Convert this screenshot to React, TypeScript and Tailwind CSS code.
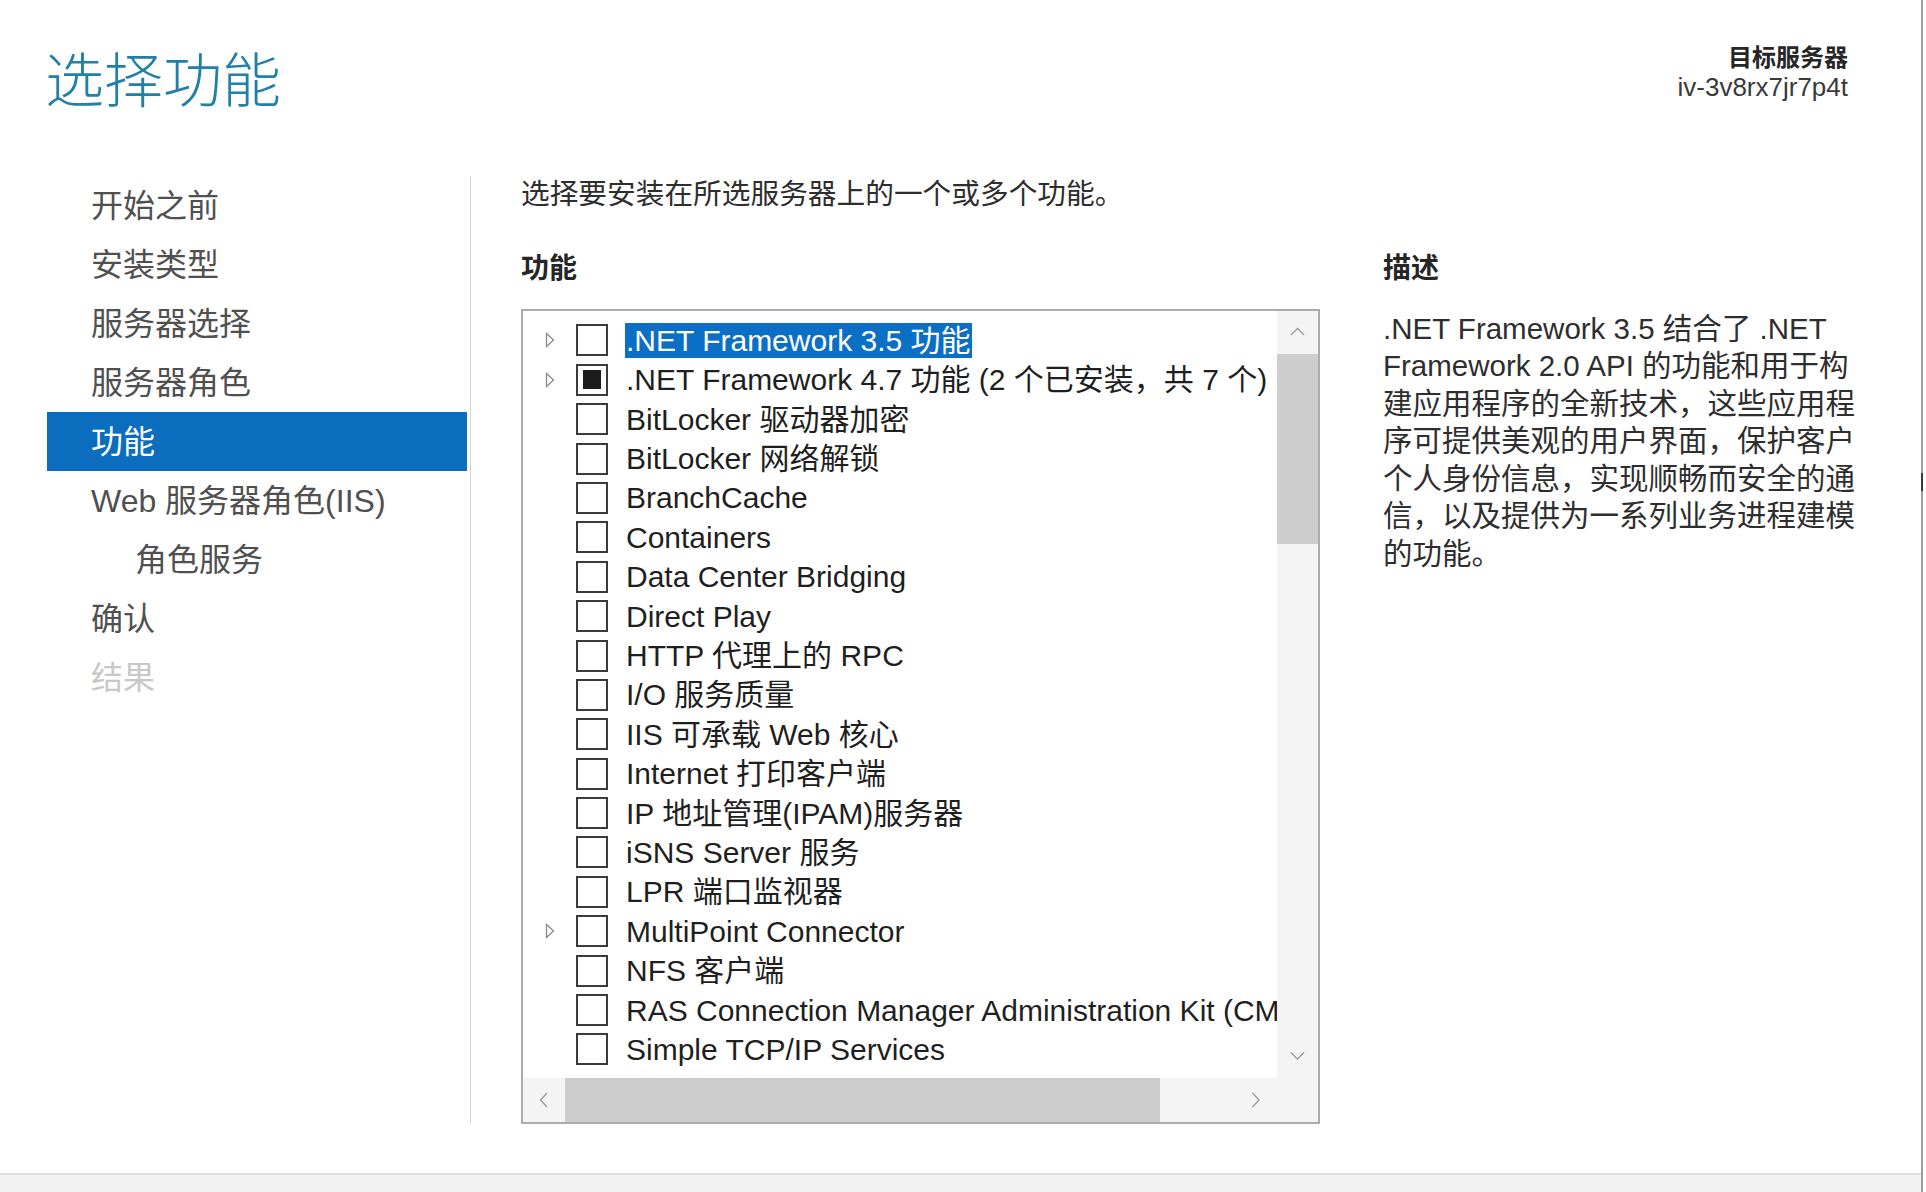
import React from 'react';

type Feature = {
  label: string;
  expand?: boolean;
  partial?: boolean;
  selected?: boolean;
};

const features: Feature[] = [
  { label: '.NET Framework 3.5 功能', expand: true, selected: true },
  { label: '.NET Framework 4.7 功能 (2 个已安装，共 7 个)', expand: true, partial: true },
  { label: 'BitLocker 驱动器加密' },
  { label: 'BitLocker 网络解锁' },
  { label: 'BranchCache' },
  { label: 'Containers' },
  { label: 'Data Center Bridging' },
  { label: 'Direct Play' },
  { label: 'HTTP 代理上的 RPC' },
  { label: 'I/O 服务质量' },
  { label: 'IIS 可承载 Web 核心' },
  { label: 'Internet 打印客户端' },
  { label: 'IP 地址管理(IPAM)服务器' },
  { label: 'iSNS Server 服务' },
  { label: 'LPR 端口监视器' },
  { label: 'MultiPoint Connector', expand: true },
  { label: 'NFS 客户端' },
  { label: 'RAS Connection Manager Administration Kit (CMAK)' },
  { label: 'Simple TCP/IP Services' },
];

const steps = [
  { label: '开始之前' },
  { label: '安装类型' },
  { label: '服务器选择' },
  { label: '服务器角色' },
  { label: '功能', active: true },
  { label: 'Web 服务器角色(IIS)' },
  { label: '角色服务', sub: true },
  { label: '确认' },
  { label: '结果', disabled: true },
];

const description = [
  '.NET Framework 3.5 结合了 .NET',
  'Framework 2.0 API 的功能和用于构',
  '建应用程序的全新技术，这些应用程',
  '序可提供美观的用户界面，保护客户',
  '个人身份信息，实现顺畅而安全的通',
  '信，以及提供为一系列业务进程建模',
  '的功能。',
];

function Expander() {
  return (
    <svg width="10" height="16" viewBox="0 0 10 16">
      <polygon points="1.5,1.5 8.5,8 1.5,14.5" fill="none" stroke="#8a8a8a" strokeWidth="1.3" />
    </svg>
  );
}

function Chevron({ dir }: { dir: 'up' | 'down' | 'left' | 'right' }) {
  if (dir === 'up' || dir === 'down') {
    const pts = dir === 'up' ? '1,8 7.5,1.5 14,8' : '1,1.5 7.5,8 14,1.5';
    return (
      <svg width="15" height="10" viewBox="0 0 15 10">
        <polyline points={pts} fill="none" stroke="#9c9c9c" strokeWidth="1.4" />
      </svg>
    );
  }
  const pts = dir === 'left' ? '8,1 1.5,8 8,15' : '1.5,1 8,8 1.5,15';
  return (
    <svg width="10" height="16" viewBox="0 0 10 16">
      <polyline points={pts} fill="none" stroke="#9c9c9c" strokeWidth="1.4" />
    </svg>
  );
}

function FeatureRow({ item }: { item: Feature }) {
  return (
    <div className="flex h-[39.4px] items-center whitespace-nowrap pl-[20px]">
      <div className="flex w-[14px] shrink-0 justify-center">{item.expand && <Expander />}</div>
      <div className="ml-[19px] flex h-[32px] w-[32px] shrink-0 items-center justify-center border-2 border-[#3a3a3a] bg-white">
        {item.partial && <div className="h-[19px] w-[18px] bg-[#1c1c1c]" />}
      </div>
      <span
        className={`ml-[17px] shrink-0 px-[1px] text-[30px] leading-[35px] ${
          item.selected ? 'bg-[#0c6fc6] text-white' : 'text-[#1f1f1f]'
        }`}
      >
        {item.label}
      </span>
    </div>
  );
}

export default function App() {
  return (
    <div className="h-[1192px] w-[1926px] overflow-hidden bg-white font-['Liberation_Sans','Noto_Sans_CJK_SC',sans-serif]">
      <div className="relative flex h-full w-[1923px] flex-col border-r-2 border-[#9d9d9d]">
        {/* resize grip tick */}
        <div className="absolute right-[-2px] top-[473px] h-[18px] w-[2px] bg-[#3a3a3a]" />

        {/* Header */}
        <header className="flex h-[176px] shrink-0 justify-between">
          <h1 className="pl-[45px] pt-[47px] font-['Noto_Sans_CJK_SC',sans-serif] text-[59px] font-light leading-none text-[#2180a8]">
            选择功能
          </h1>
          <div className="pr-[73px] pt-[44px] text-right">
            <div className="font-['Noto_Sans_CJK_SC',sans-serif] text-[24px] font-bold leading-none text-[#262626]">
              目标服务器
            </div>
            <div className="mt-[6px] text-[26px] leading-[26px] text-[#3a3a3a]">iv-3v8rx7jr7p4t</div>
          </div>
        </header>

        {/* Main */}
        <div className="flex h-[948px] shrink-0">
          {/* Steps */}
          <nav className="w-[471px] shrink-0 border-r border-[#d5d5d5] pl-[47px] pr-[3px]">
            {steps.map((s) => (
              <div
                key={s.label}
                className={`flex h-[59px] items-center text-[32px] leading-none ${
                  s.sub ? 'pl-[88px]' : 'pl-[44px]'
                } ${
                  s.active
                    ? 'bg-[#0b6dbd] text-white'
                    : s.disabled
                    ? 'text-[#c8c8c8]'
                    : 'text-[#505050]'
                }`}
              >
                {s.label}
              </div>
            ))}
          </nav>

          {/* Content */}
          <section className="flex flex-1 flex-col pl-[50px] pt-[2px]">
            <p className="font-['Noto_Sans_CJK_SC',sans-serif] text-[28.7px] leading-none text-[#2e2e2e]">
              选择要安装在所选服务器上的一个或多个功能。
            </p>

            <div className="mt-[45px] flex gap-[63px]">
              {/* Features */}
              <div className="w-[799px] shrink-0">
                <h2 className="font-['Noto_Sans_CJK_SC',sans-serif] text-[28px] font-bold leading-none text-[#262626]">
                  功能
                </h2>
                <div className="mt-[29px] grid h-[815px] grid-cols-[1fr_41px] grid-rows-[1fr_44px] border-2 border-[#ababab]">
                  {/* list */}
                  <div className="min-w-0 overflow-hidden bg-white pt-[10px]">
                    {features.map((f) => (
                      <FeatureRow key={f.label} item={f} />
                    ))}
                  </div>

                  {/* vertical scrollbar */}
                  <div className="flex flex-col bg-[#f4f4f4]">
                    <div className="flex h-[43px] items-center justify-center">
                      <Chevron dir="up" />
                    </div>
                    <div className="h-[190px] bg-[#cdcdcd]" />
                    <div className="flex-1" />
                    <div className="flex h-[43px] items-center justify-center">
                      <Chevron dir="down" />
                    </div>
                  </div>

                  {/* horizontal scrollbar */}
                  <div className="flex bg-[#f4f4f4]">
                    <div className="flex w-[42px] items-center justify-center">
                      <Chevron dir="left" />
                    </div>
                    <div className="w-[595px] bg-[#cdcdcd]" />
                    <div className="flex-1" />
                    <div className="flex w-[42px] items-center justify-center">
                      <Chevron dir="right" />
                    </div>
                  </div>

                  {/* corner */}
                  <div className="bg-[#f4f4f4]" />
                </div>
              </div>

              {/* Description */}
              <div className="flex-1">
                <h2 className="font-['Noto_Sans_CJK_SC',sans-serif] text-[28px] font-bold leading-none text-[#262626]">
                  描述
                </h2>
                <div className="mt-[30px] text-[29.5px] leading-[37.5px] text-[#2e2e2e]">
                  {description.map((line) => (
                    <div key={line} className="whitespace-nowrap">
                      {line}
                    </div>
                  ))}
                </div>
              </div>
            </div>
          </section>
        </div>

        <div className="flex-1" />

        {/* Bottom band */}
        <div className="h-[19px] shrink-0 border-t-2 border-[#dedede] bg-[#f2f2f2]" />
      </div>
    </div>
  );
}
